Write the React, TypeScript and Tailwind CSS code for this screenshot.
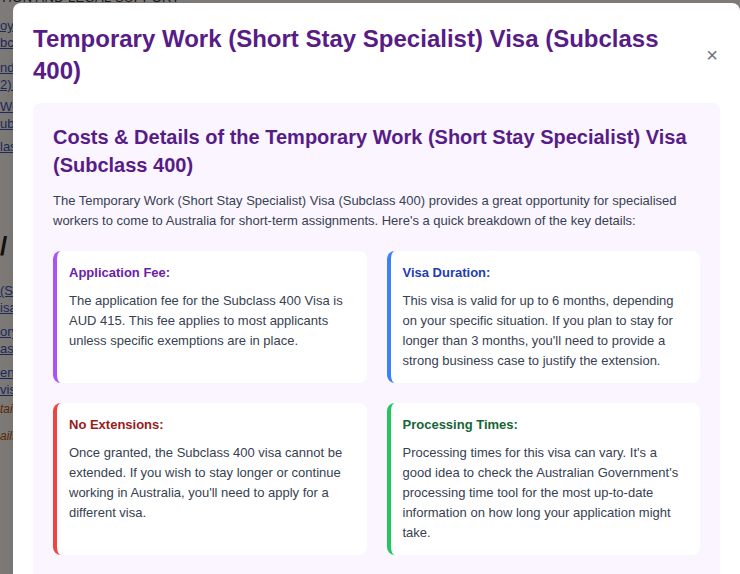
import React from "react";

const cards = [
  {
    title: "Application Fee:",
    border: "border-l-[#a855f7]",
    color: "text-[#6b21a8]",
    body: "The application fee for the Subclass 400 Visa is AUD 415. This fee applies to most applicants unless specific exemptions are in place.",
  },
  {
    title: "Visa Duration:",
    border: "border-l-[#3b82f6]",
    color: "text-[#1e40af]",
    body: "This visa is valid for up to 6 months, depending on your specific situation. If you plan to stay for longer than 3 months, you'll need to provide a strong business case to justify the extension.",
  },
  {
    title: "No Extensions:",
    border: "border-l-[#ef4444]",
    color: "text-[#991b1b]",
    body: "Once granted, the Subclass 400 visa cannot be extended. If you wish to stay longer or continue working in Australia, you'll need to apply for a different visa.",
  },
  {
    title: "Processing Times:",
    border: "border-l-[#22c55e]",
    color: "text-[#166534]",
    body: "Processing times for this visa can vary. It's a good idea to check the Australian Government's processing time tool for the most up-to-date information on how long your application might take.",
  },
];

function Link({ children, className = "" }: { children: React.ReactNode; className?: string }) {
  return (
    <div className={`whitespace-nowrap text-[13px] leading-[17px] text-[#3b56b8] underline ${className}`}>
      {children}
    </div>
  );
}

export default function App() {
  return (
    <div
      className="relative h-[574px] w-[740px] overflow-hidden bg-[#faf5ef]"
      style={{ fontFamily: "'Liberation Sans', Arial, sans-serif" }}
    >
      {/* background page */}
      <div className="flex flex-col">
        <div className="mt-[-9px] whitespace-nowrap text-[13px] uppercase leading-[14px] tracking-wide text-[#333]">
          tion and legal support
        </div>
        <div className="flex w-[13px] flex-col overflow-hidden">
          <Link className="mt-[12px]">oyer</Link>
          <Link>bc</Link>
          <Link className="mt-[8px]">nd</Link>
          <Link>2) v</Link>
          <Link className="mt-[5px]">Wor</Link>
          <Link>ubc</Link>
          <Link className="mt-[6px] text-[#3a6a7a]">lass</Link>
          <div className="mt-[76px] whitespace-nowrap text-[26px] font-bold leading-[30px] text-[#222]">
            / <span className="text-[#b45309]">I</span>
          </div>
          <Link className="mt-[21px]">(Su</Link>
          <Link>isa</Link>
          <Link className="mt-[7px]">ory</Link>
          <Link>ass</Link>
          <Link className="mt-[7px]">en</Link>
          <Link>vis</Link>
          <div className="mt-[3px] whitespace-nowrap text-[12px] italic leading-[17px] text-[#b45309]">tail</div>
          <div className="mt-[10px] whitespace-nowrap text-[12px] italic leading-[17px] text-[#b45309]">ails</div>
        </div>
      </div>

      {/* overlay */}
      <div className="absolute inset-0 bg-black/50" />

      {/* modal */}
      <div className="absolute left-[13px] top-[3px] w-[727px] rounded-lg bg-white p-5 shadow-xl">
        <div className="mb-4 flex items-center justify-between">
          <h2 className="text-2xl font-bold leading-8 text-[#581c87]">
            Temporary Work (Short Stay Specialist) Visa (Subclass 400)
          </h2>
          <button className="ml-4 mr-[2px] text-[20px] leading-none text-[#6b7280]">×</button>
        </div>

        <div className="rounded-lg bg-[#faf5ff] p-5 pb-10">
          <h3 className="mb-3 text-xl font-bold leading-7 text-[#581c87]">
            Costs &amp; Details of the Temporary Work (Short Stay Specialist) Visa (Subclass 400)
          </h3>
          <p className="mb-5 text-[13px] leading-5 text-[#374151]">
            The Temporary Work (Short Stay Specialist) Visa (Subclass 400) provides a great opportunity for
            specialised workers to come to Australia for short-term assignments. Here's a quick breakdown of the key
            details:
          </p>
          <div className="grid grid-cols-2 gap-5">
            {cards.map((c) => (
              <div key={c.title} className={`rounded-lg border-l-4 bg-white p-3 ${c.border}`}>
                <h4 className={`mb-2 text-[13px] font-bold leading-5 ${c.color}`}>{c.title}</h4>
                <p className="text-[13px] leading-5 text-[#374151]">{c.body}</p>
              </div>
            ))}
          </div>
        </div>
      </div>
    </div>
  );
}
